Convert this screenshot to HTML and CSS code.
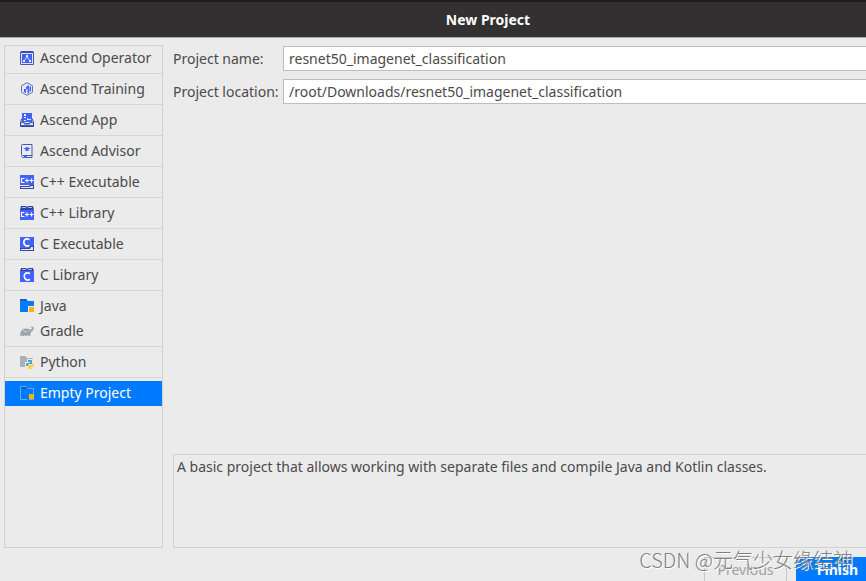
FILE: index.html
```html
<!DOCTYPE html>
<html lang="en">
<head>
<meta charset="utf-8">
<title>New Project</title>
<link rel="stylesheet" href="styles.css">
</head>
<body>
<header class="titlebar"><h1>New Project</h1></header>
<main class="content">
  <nav class="types" aria-label="Project type">
    <div class="group"><a class="type" href="#operator">
      <svg class="icon" viewBox="0 0 14 14"><path fill="#dfe3f8" stroke="#4b5aa8" d="M.5 1.500h13v12H.5z"/><path fill="#3c4dab" d="M1 0h12l1 2H0z"/><path fill="#4262ff" d="M2 3h10v9H2z"/><path stroke="#cfd8ff" fill="none" d="M7 5.500 4.500 9.500M7 5.500 9.500 9.500"/><path fill="#e6eaff" d="M6 4h2v2H6zM3 9h2v2H3zM9 9h2v2H9z"/></svg>Ascend Operator</a></div>
    <div class="group"><a class="type" href="#training">
      <svg class="icon" viewBox="0 0 14 14"><path fill="#e4e8f8" stroke="#6470b4" d="M7 .7 12.500 3.800v6.400L7 13.300 1.500 10.200V3.800z"/><path fill="#4262ff" d="M4 7h2v4L4 10zM6 5 9 3v8l-1.500.5V6L6 8zM9.500 5l1.500-1v5L9.500 10z"/></svg>Ascend Training</a></div>
    <div class="group"><a class="type" href="#app">
      <svg class="icon" viewBox="0 0 14 14"><path fill="#dfe3f8" stroke="#34459f" d="M2 5.500.5 9v4.500h13V9L12 5.500"/><path fill="#4262ff" d="M2 0h10v9H2z"/><path fill="#e8ecff" d="M4 1h2v2H4zM4 4h2v1H4zM7 5h1v2H7zM8 6h3v1H8zM4 7h2v1H4z"/><path fill="#4b5aa8" d="M0 9h4l1 1h4l1-1h4v1h-3.500l-1 1.500h-5l-1-1.500H0zM1 12h12v1H1z"/></svg>Ascend App</a></div>
    <div class="group"><a class="type" href="#advisor">
      <svg class="icon" viewBox="0 0 14 14"><path fill="#e9ebf6" stroke="#4b5aa8" d="M2.500.500h9.500v11H2.500q-1 0-1-1v-9q0-1 1-1zM2.500 11.500q-1.500 1 0 2H12v-2"/><path fill="#4262ff" d="M3.500 4.500 7 3l3.500 1.500L7 6zM5.500 5h3v2h-3zM4 12h3v2H4z"/></svg>Ascend Advisor</a></div>
    <div class="group"><a class="type" href="#cpp-exe">
      <svg class="icon" viewBox="0 0 14 14"><path fill="#4262ff" d="M0 0h14v10H0z"/><path fill="none" stroke="#fff" stroke-width="1.200" d="M4.500 3.500h-3v4h3M5 5.500h4M7 3.500v4M9.500 5.500h4M11.500 3.500v4"/><path fill="#34459f" d="M0 11h9l1-1h4v4H0z"/><path fill="#e9ebf6" d="M1 12h9l1-1h2v2H1z"/></svg>C++ Executable</a></div>
    <div class="group"><a class="type" href="#cpp-lib">
      <svg class="icon" viewBox="0 0 14 14"><path fill="#34459f" d="M1 0h5l1 1 1-1h5l1 4H0z"/><path fill="#a9b6f2" d="M2 1h4v1H2zM8 1h4v1H8z"/><path fill="#4262ff" d="M0 4h14v10H0z"/><path fill="none" stroke="#fff" stroke-width="1.200" d="M4.500 6.500h-3v4h3M5 8.500h4M7 6.500v4M9.500 8.500h4M11.500 6.500v4"/></svg>C++ Library</a></div>
    <div class="group"><a class="type" href="#c-exe">
      <svg class="icon" viewBox="0 0 14 14"><path fill="#4262ff" d="M0 0h14v11H0z"/><path fill="none" stroke="#fff" stroke-width="1.600" d="M9.500 2.500Q6 1 4.500 3t0 4.500 5 1"/><path fill="#34459f" d="M0 11h9l1-2h4v5H0z"/><path fill="#e9ebf6" d="M1 12h9l1-2h2v3H1z"/></svg>C Executable</a></div>
    <div class="group"><a class="type" href="#c-lib">
      <svg class="icon" viewBox="0 0 14 14"><path fill="#34459f" d="M1 0h5l1 1 1-1h5l1 3H0z"/><path fill="#a9b6f2" d="M2 1h4v1H2zM8 1h4v1H8z"/><path fill="#4262ff" d="M0 3h14v11H0z"/><path fill="none" stroke="#fff" stroke-width="1.600" d="M10 5.500Q6.500 4 5 6t0 4.500 5 1"/></svg>C Library</a></div>
    <div class="group"><a class="type" href="#java">
      <svg class="icon" viewBox="0 0 14 14"><path fill="#007aff" d="M0 0h6l2 2h6v11H0z"/><path fill="#0b5fc0" d="M0 0h6l1 2H0z"/><path fill="#ebebeb" d="M8 7h6v7H8z"/><path fill="#f8b500" d="M9 8h5v5H9z"/></svg>Java</a>
      <a class="type" href="#gradle">
      <svg class="icon" viewBox="0 0 14 14"><path fill="#9ba7ae" d="M0 12q0-5 3-7 3-1 6 0 3 1 3-1 0-1-2-.5Q11 2 12.500 2.500q2 1 1 3T11 8l-1 4H8.500q-.5-2-1.500 0H5.500q-.5-2-1.500 0H2.500Q1.500 10 1.500 12z"/><path fill="none" stroke="#ebebeb" stroke-width=".7" d="M3 6q1 2 4 2M9 6.500h1"/></svg>Gradle</a></div>
    <div class="group"><a class="type" href="#python">
      <svg class="icon" viewBox="0 0 14 14"><path fill="#a7b1b8" d="M0 1h5l2 2h6v9H0z"/><path fill="#ebebeb" d="M7 4h6v3h1v7H7v-2H5V7h2z"/><path fill="#3fa5d0" d="M8 5h3q1 0 1 1v3H9q-1 0-1 2H6.500Q6 11 6 9.500T7 8h3V7H8z"/><path fill="#ffd22e" d="M12.500 8q1.500 0 1.500 2t-1.500 2H11v1h1v1H9q-1 0-1-1v-1.500Q8 10 9.500 10h3z"/></svg>Python</a></div>
    <div class="group"><a class="type selected" href="#empty" aria-current="true">
      <svg class="icon" viewBox="0 0 14 14"><path fill="#007aff" stroke="#62adfa" d="M.5.500H6l2 2h5.500v11H.5z"/><path fill="#0b5fc0" d="M1 1h5l1 2H1z"/><path fill="#007aff" d="M8 7h5v1H9v6H7V8z"/><path fill="#f8b500" d="M9 8h5v5H9z"/></svg>Empty Project</a></div>
  </nav>
  <section class="settings">
    <form class="fields">
      <label for="name">Project name:</label>
      <input id="name" type="text" value="resnet50_imagenet_classification">
      <label for="location">Project location:</label>
      <input id="location" type="text" value="/root/Downloads/resnet50_imagenet_classification">
    </form>
    <p class="description">A basic project that allows working with separate files and compile Java and Kotlin classes.</p>
  </section>
</main>
<footer class="actions">
  <button type="button" class="button" disabled>Previous</button>
  <button type="button" class="button primary">Finish</button>
</footer>
<div class="watermark">CSDN @元气少女缘结神</div>
</body>
</html>
```
FILE: styles.css
```css
* { box-sizing: border-box; }
body {
  margin: 0;
  height: 100vh;
  display: flex;
  flex-direction: column;
  overflow: hidden;
  position: relative;
  background: #ebebeb;
  color: #4a4a4a;
  font: 14px/24px "Noto Sans", "Open Sans", sans-serif;
}
.titlebar {
  height: 38px;
  flex: none;
  display: flex;
  align-items: center;
  justify-content: center;
  padding-left: 110px;
  background: #323030;
  border-top: 2px solid #1e1c1c;
  border-bottom: 1px solid #aaa;
  color: #fff;
}
.titlebar h1 { margin: 0; font-size: 14px; }
.content {
  flex: 1;
  display: flex;
  gap: 10px;
  padding: 7px 0 9px 4px;
  min-height: 0;
}
.types {
  width: 159px;
  flex: none;
  border: 1px solid #d1d1d1;
}
.group { padding: 3px 0 2px; border-bottom: 1px solid #d6d6d6; }
.group:first-child { padding-top: 0; }
.group:last-child { border-bottom: 0; }
.type {
  display: flex;
  align-items: center;
  gap: 6px;
  height: 25px;
  padding: 0 0 1px 15px;
  color: inherit;
  text-decoration: none;
  white-space: nowrap;
}
.selected { background: #007aff; color: #fff; }
.icon { width: 14px; height: 14px; flex: none; }
.settings {
  flex: 1;
  display: flex;
  flex-direction: column;
  justify-content: space-between;
}
.fields {
  display: grid;
  grid-template-columns: 110px 1fr;
  align-items: center;
  row-gap: 8px;
  padding-top: 1px;
  white-space: nowrap;
}
.fields input {
  height: 25px;
  width: 100%;
  min-width: 0;
  padding: 0 5px;
  border: 1px solid #bdbdbd;
  border-right: 0;
  border-radius: 0;
  background: #fff;
  color: inherit;
  font: inherit;
}
.description {
  margin: 0;
  height: 94px;
  padding: 0 3px;
  border: 1px solid #d1d1d1;
  border-right: 0;
}
.actions {
  flex: none;
  height: 24px;
  display: flex;
  justify-content: flex-end;
  gap: 9px;
  margin-right: -13px;
}
.button {
  width: 83px;
  height: 25px;
  padding: 0;
  border: 1px solid #c8c8c8;
  border-radius: 0;
  background: #ebebeb;
  color: #a0a0a0;
  font: inherit;
}
.primary { background: #007aff; border-color: #007aff; color: #fff; font-weight: bold; }
.watermark {
  position: absolute;
  right: 13px;
  bottom: 7px;
  color: #808080;
  font: 300 20px/28px "Noto Sans CJK SC", sans-serif;
  text-shadow: 1px 1px 0 #fff;
  white-space: nowrap;
  pointer-events: none;
}
```
